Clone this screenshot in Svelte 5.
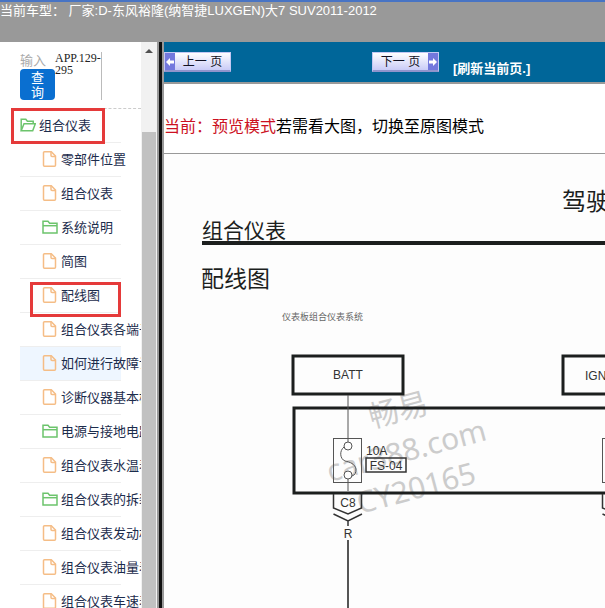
<script>
    const car = "厂家:D-东风裕隆(纳智捷LUXGEN)大7 SUV2011-2012";

    // type: "open" | "folder" | "file"
    const items = [
        { name: "组合仪表", type: "open", marked: true },
        { name: "零部件位置", type: "file" },
        { name: "组合仪表", type: "file" },
        { name: "系统说明", type: "folder" },
        { name: "简图", type: "file" },
        { name: "配线图", type: "file", marked: true },
        { name: "组合仪表各端子", type: "file" },
        { name: "如何进行故障诊断", type: "file", hover: true },
        { name: "诊断仪器基本检查", type: "file" },
        { name: "电源与接地电路", type: "folder" },
        { name: "组合仪表水温表", type: "file" },
        { name: "组合仪表的拆装", type: "folder" },
        { name: "组合仪表发动机", type: "file" },
        { name: "组合仪表油量表", type: "file" },
        { name: "组合仪表车速表", type: "file" },
    ];

    let keyword = $state("");
</script>

<div class="page">
    <header class="header">当前车型： {car}</header>

    <div class="body">
        <aside class="sidebar">
            <div class="tree-pane">
                <form class="search" onsubmit={(e) => e.preventDefault()}>
                    <div class="search-controls">
                        <input type="text" placeholder="输入" aria-label="输入" bind:value={keyword} />
                        <button type="submit">查询</button>
                    </div>
                    <div class="code">APP.129-295</div>
                </form>

                <ul class="tree">
                    {#each items as item}
                        <li class="item" class:root={item.type === "open"} class:hover={item.hover}>
                            <a href="#item">
                                {#if item.type === "file"}
                                    <svg class="icon file" viewBox="0 0 16 16">
                                        <path d="M2.500 .8h6.800l4.200 4.200V14.200a1 1 0 0 1-1 1h-10a1 1 0 0 1-1-1V1.800a1 1 0 0 1 1-1z" />
                                        <path d="M9 1v3.500a1 1 0 0 0 1 1h3.500" />
                                    </svg>
                                {:else if item.type === "folder"}
                                    <svg class="icon folder" viewBox="0 0 16 16">
                                        <path d="M1 14V2.200h5l1.600 2H15V14z" />
                                        <path d="M1 6.700h14" />
                                    </svg>
                                {:else}
                                    <svg class="icon folder" viewBox="0 0 16 16">
                                        <path d="M1.200 13.500V2.200h4.600l1.600 2h5.800v2.600" />
                                        <path d="M1.200 13.800 4 6.800h11.300l-2.600 7z" />
                                    </svg>
                                {/if}
                                <span>{item.name}</span>
                            </a>
                            {#if item.marked}
                                <div class="mark"></div>
                            {/if}
                        </li>
                    {/each}
                </ul>
            </div>
            <div class="scrollbar">
                <div class="arrow-up"></div>
                <div class="thumb"></div>
            </div>
        </aside>

        <div class="splitter"></div>

        <main class="main">
            <nav class="toolbar">
                <button class="pager prev">
                    <span class="pager-icon">
                        <svg viewBox="0 0 10 10"><path d="M1 5l4-4v2.500h4v3H5V9z" /></svg>
                    </span>
                    <span class="pager-text">上一 页</span>
                </button>
                <button class="pager next">
                    <span class="pager-text">下一 页</span>
                    <span class="pager-icon">
                        <svg viewBox="0 0 10 10"><path d="M9 5L5 1v2.500H1v3h4V9z" /></svg>
                    </span>
                </button>
                <a class="refresh" href="#refresh">[刷新当前页.]</a>
            </nav>

            <p class="mode"><span class="current">当前：预览模式</span>若需看大图，切换至原图模式</p>

            <div class="drawing">
                <svg class="diagram" width="760" height="900" viewBox="0 0 760 900">
                    <!-- Watermark -->
                    <g class="watermark">
                        <text transform="translate(208 274) rotate(-15)">畅易</text>
                        <text transform="translate(166 328) rotate(-15)">car388.com</text>
                        <text transform="translate(196 360) rotate(-15)">CY20165</text>
                    </g>

                    <!-- Titles -->
                    <text class="title" x="398" y="56" font-size="24">驾驶</text>
                    <text class="title" x="38" y="84" font-size="21">组合仪表</text>
                    <rect x="38" y="87" width="722" height="4" fill="#1c1f1e" />
                    <text class="title" x="37" y="133" font-size="23">配线图</text>
                    <text class="caption" x="118" y="166" font-size="9">仪表板组合仪表系统</text>

                    <!-- Supplies -->
                    <g class="thick">
                        <rect x="129" y="202" width="110" height="38" />
                        <rect x="399" y="202" width="110" height="38" />
                        <rect x="130" y="254" width="660" height="85" />
                    </g>
                    <text class="label" x="184" y="225" text-anchor="middle">BATT</text>
                    <text class="label" x="421" y="226">IGN1</text>

                    <!-- Fuse -->
                    <g class="thin">
                        <path d="M184 241v47M184 325v12" />
                        <rect x="169.500" y="284.500" width="28" height="44" />
                        <path d="M180 293c-5 4-4 12 1 14 5 1 10 3 11 8 0 4-1 6-4 7" />
                        <circle cx="184" cy="292" r="4" />
                        <circle cx="184" cy="321" r="4" />
                        <rect x="438.500" y="284.500" width="28" height="44" />
                    </g>
                    <text class="label" x="202" y="301">10A</text>
                    <rect class="medium" x="202" y="304" width="40" height="14" />
                    <text class="label" x="222" y="316" text-anchor="middle">FS-04</text>

                    <!-- Connector -->
                    <path class="medium" d="M169.500 340v14l14.500 6 13.500-6v-14M169.500 360l14.500 7 14-7M184 367v5" />
                    <path class="medium" d="M438.500 340v14l14.500 6 13.500-6v-14M438.500 360l14.500 7 14-7" />
                    <text class="label" x="184" y="353" text-anchor="middle">C8</text>
                    <text class="label" x="184" y="384" text-anchor="middle">R</text>
                    <path class="wire" d="M184 386v514" />
                </svg>
            </div>
        </main>
    </div>
</div>

<style>
    :global(body) {
        margin: 0;
        background-color: #ffffff;
    }

    .page {
        height: 100vh;
        display: flex;
        flex-direction: column;
        overflow: hidden;
        font-family: "Liberation Sans", "Noto Sans CJK SC", sans-serif;
        font-size: 13px;
    }

    .header {
        flex: 0 0 42px;
        box-sizing: border-box;
        border-top: 2px solid #4874c4;
        background-color: #999999;
        color: #ffffff;
        line-height: 17px;
        white-space: nowrap;
        overflow: hidden;
    }

    .body {
        flex: 1;
        min-height: 0;
        display: flex;
    }

    /* ── Sidebar ── */
    .sidebar {
        flex: 0 0 157px;
        display: flex;
    }

    .tree-pane {
        flex: 1;
        min-width: 0;
        overflow: hidden;
    }

    .search {
        display: flex;
        align-items: flex-start;
        box-sizing: border-box;
        height: 67px;
        margin-left: 20px;
        padding-top: 10px;
        border-bottom: 1px dashed #cccccc;
    }

    .search-controls {
        width: 35px;
        display: flex;
        flex-direction: column;
    }

    .search-controls input {
        width: 100%;
        height: 17px;
        box-sizing: border-box;
        border: 0;
        padding: 0;
        background: none;
        font: inherit;
        line-height: 17px;
    }

    .search-controls input::placeholder {
        color: #aaaaaa;
        opacity: 1;
    }

    .search-controls button {
        height: 31px;
        border: 0;
        border-radius: 4px;
        padding: 0 11px;
        background-color: #0a6fd0;
        color: #ffffff;
        font: inherit;
        line-height: 15px;
        word-break: break-all;
    }

    .code {
        width: 46px;
        height: 48px;
        border-right: 1px solid #bbbbbb;
        font-family: "Liberation Serif", serif;
        font-size: 12px;
        line-height: 12px;
        color: #222222;
    }

    .tree {
        list-style: none;
        margin: 0;
        padding: 0;
    }

    .item {
        position: relative;
        width: 101px;
        height: 34px;
        box-sizing: border-box;
        margin-left: 20px;
        border-bottom: 1px solid #eeeeee;
    }

    .item.hover {
        background-color: #eef6ff;
    }

    .item a {
        height: 31px;
        display: flex;
        align-items: center;
        gap: 3px;
        padding-left: 22px;
        color: #1c2c4c;
        text-decoration: none;
        white-space: nowrap;
    }

    .item.root a {
        padding-left: 0;
    }

    .icon {
        flex: 0 0 16px;
        height: 16px;
        fill: none;
        stroke-width: 1.5;
    }

    .icon.file {
        stroke: #f5bd86;
    }

    .icon.folder {
        stroke: #6cc46c;
    }

    /* Red frame drawn over a highlighted entry */
    .mark {
        position: absolute;
        inset: 3px 0 -5px 10px;
        border: 3px solid #e53a3a;
    }

    .root .mark {
        inset: -1px 16px -2px -9px;
    }

    .scrollbar {
        flex: 0 0 16px;
        box-sizing: border-box;
        display: flex;
        flex-direction: column;
        align-items: center;
        padding: 0 1px;
        background-color: #f1f1f1;
    }

    .arrow-up {
        margin: 7px 0 79px;
        border: 4px solid transparent;
        border-top: 0;
        border-bottom-color: #505050;
    }

    .thumb {
        flex: 1;
        width: 100%;
        background-color: #c1c1c1;
    }

    .splitter {
        flex: 0 0 3px;
        border: solid;
        border-width: 0 2px;
        border-color: #999999;
        background-color: #111111;
    }

    /* ── Main ── */
    .main {
        flex: 1;
        min-width: 0;
        display: flex;
        flex-direction: column;
    }

    .toolbar {
        flex: 0 0 40px;
        display: flex;
        align-items: center;
        border-bottom: 2px solid #999999;
        background-color: #006699;
        white-space: nowrap;
    }

    .pager {
        flex: 0 0 67px;
        height: 20px;
        box-sizing: border-box;
        display: flex;
        border: 1px solid #c4c8f4;
        border-bottom: 2px solid #8f94cc;
        padding: 0;
        background: linear-gradient(#ffffff, #c9cbf7);
        color: #111122;
        font: inherit;
        font-size: 12px;
        line-height: 18px;
    }

    .next {
        margin-left: 141px;
    }

    .pager-text {
        flex: 1;
        text-align: center;
    }

    .pager-icon {
        flex: 0 0 10px;
        display: flex;
        align-items: center;
        background-color: #7378dd;
    }

    .pager-icon svg {
        width: 10px;
        height: 10px;
        fill: #ffffff;
    }

    .refresh {
        margin: 10px 0 0 14px;
        color: #ffffff;
        font-weight: 700;
        text-decoration: none;
    }

    .mode {
        margin: 0;
        border-bottom: 1px solid #999999;
        padding: 31px 0 14px;
        font-size: 16px;
        line-height: 24px;
        white-space: nowrap;
        color: #000000;
    }

    .current {
        color: #cc1122;
    }

    .drawing {
        flex: 1;
        min-height: 0;
        overflow: hidden;
        background-color: #fdfdfd;
    }

    .diagram {
        display: block;
        font-family: "Liberation Sans", "Noto Sans CJK SC", sans-serif;
    }

    .title {
        fill: #1c1f1e;
    }

    .caption {
        fill: #666666;
    }

    .label {
        font-size: 12px;
        fill: #333333;
    }

    .watermark {
        font-family: "Noto Sans", "Noto Sans CJK SC", sans-serif;
        font-size: 30px;
        fill: #cccccc;
    }

    .thick {
        fill: none;
        stroke: #1c1f1e;
        stroke-width: 3;
    }

    .thin {
        fill: none;
        stroke: #555555;
        stroke-width: 1;
    }

    .thin circle {
        fill: #fdfdfd;
    }

    .medium {
        fill: none;
        stroke: #333333;
        stroke-width: 1.5;
    }

    .wire {
        stroke: #555555;
        stroke-width: 2;
    }
</style>
